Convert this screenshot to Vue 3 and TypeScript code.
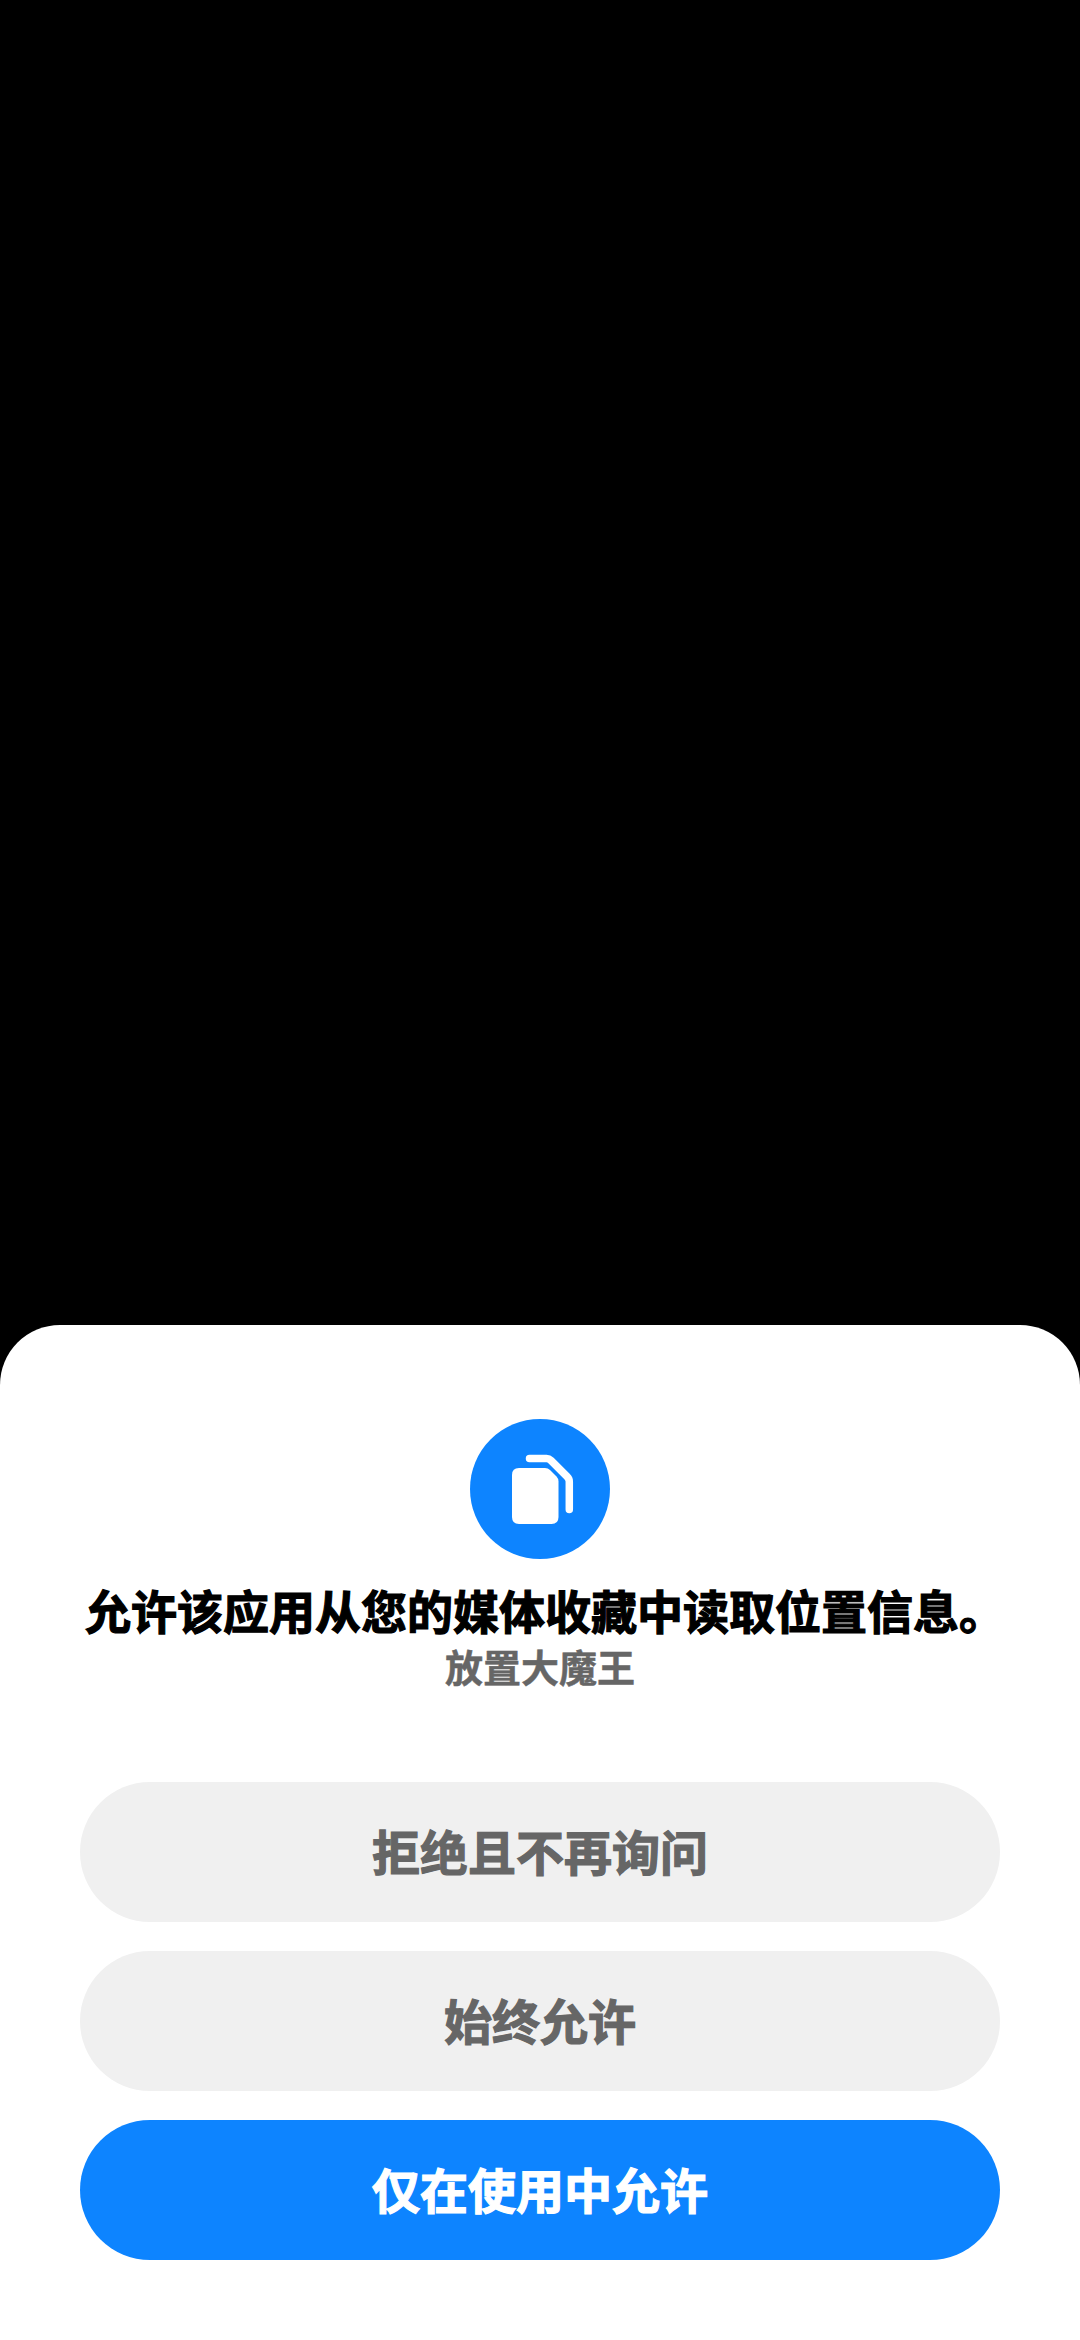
<script setup lang="ts">
const actions = [
  { id: 'deny', label: '拒绝且不再询问', primary: false },
  { id: 'always', label: '始终允许', primary: false },
  { id: 'while-using', label: '仅在使用中允许', primary: true },
]
</script>

<template>
  <div class="screen">
    <section class="sheet">
      <div class="perm-icon">
        <svg width="140" height="140" viewBox="0 0 140 140">
          <circle cx="70" cy="70" r="70" fill="#0d84ff" />
          <path
            d="M49 49H75Q78 49 80 51L86.500 57.500Q88.500 59.500 88.500 62.500V98Q88.500 105 81.500 105H49Q42 105 42 98V56Q42 49 49 49Z"
            fill="#fff"
          />
          <path
            d="M59.500 39.500H76.500Q79 39.500 81 41.500L97 57.500Q99.300 59.800 99.300 62.500V90.500"
            fill="none"
            stroke="#fff"
            stroke-width="7.500"
            stroke-linecap="round"
            stroke-linejoin="round"
          />
        </svg>
      </div>
      <h1 class="title">允许该应用从您的媒体收藏中读取位置信息。</h1>
      <p class="app-name">放置大魔王</p>
      <div class="actions">
        <button
          v-for="action in actions"
          :key="action.id"
          :class="['action', { primary: action.primary }]"
        >
          {{ action.label }}
        </button>
      </div>
    </section>
  </div>
</template>

<style>
html,
body {
  margin: 0;
  background: #000;
}
</style>

<style scoped>
.screen {
  display: flex;
  flex-direction: column;
  justify-content: flex-end;
  height: 2340px;
  background: #000;
  font-family: 'Noto Sans CJK SC', 'Noto Sans', sans-serif;
}

.sheet {
  display: flex;
  flex-direction: column;
  align-items: center;
  height: 1015px;
  box-sizing: border-box;
  padding-top: 94px;
  background: #fff;
  border-radius: 60px 60px 0 0;
}

.perm-icon {
  width: 140px;
  height: 140px;
}

.perm-icon svg {
  display: block;
}

.title {
  margin: 17px 0 0;
  padding-left: 10px;
  font-size: 46px;
  line-height: 66px;
  font-weight: 700;
  -webkit-text-stroke: 1.2px #000;
  color: #000;
  white-space: nowrap;
}

.app-name {
  margin: 0;
  font-size: 38px;
  line-height: 48px;
  font-weight: 700;
  -webkit-text-stroke: 0.5px #666;
  color: #666;
}

.actions {
  display: flex;
  flex-direction: column;
  gap: 29px;
  width: 920px;
  margin-top: 92px;
}

.action {
  height: 140px;
  padding: 0 0 4px;
  border: none;
  border-radius: 70px;
  background: #f0f0f0;
  font-family: inherit;
  font-size: 48px;
  font-weight: 700;
  -webkit-text-stroke: 1.2px #666;
  color: #666;
}

.action.primary {
  background: #0d84ff;
  -webkit-text-stroke: 1.2px #fff;
  color: #fff;
}
</style>
